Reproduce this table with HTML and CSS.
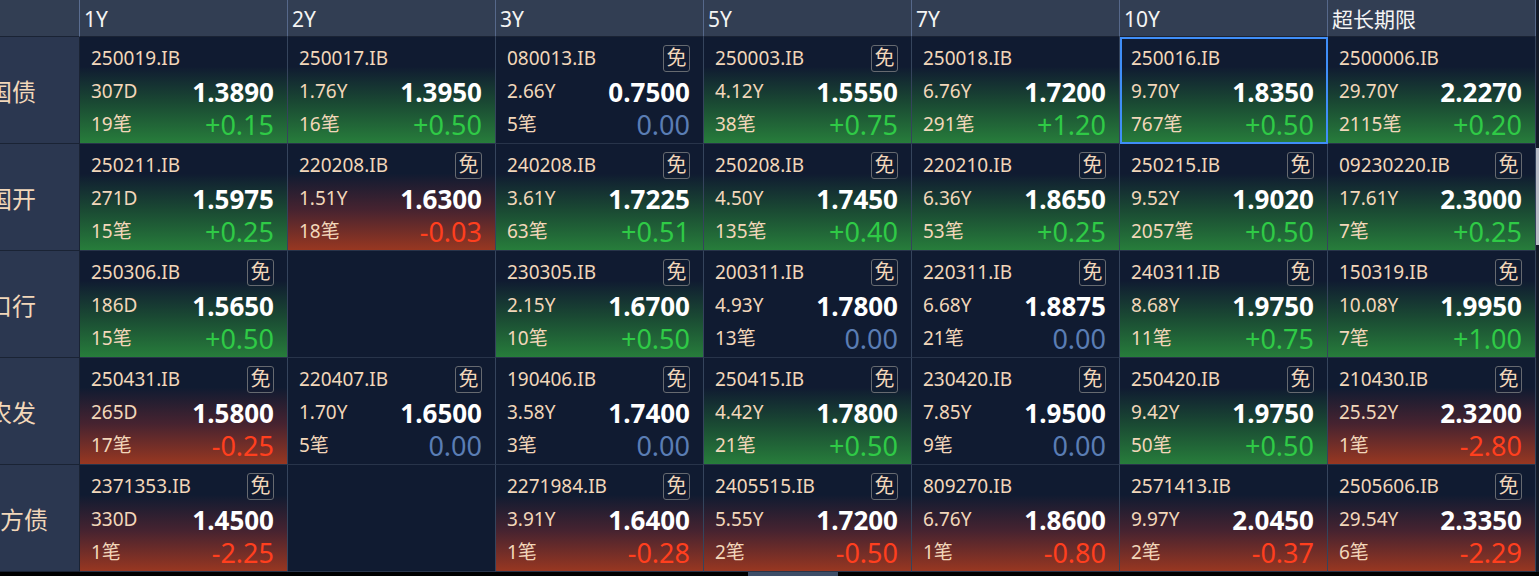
FILE: index.html
```html
<!DOCTYPE html>
<html lang="zh">
<head>
<meta charset="utf-8">
<title>收益率矩阵</title>
<link rel="stylesheet" href="styles.css">
</head>
<body>
<div class="frame">
  <div class="grid">
    <div class="hd hd-corner"></div>
    <div class="hd">1Y</div>
    <div class="hd">2Y</div>
    <div class="hd">3Y</div>
    <div class="hd">5Y</div>
    <div class="hd">7Y</div>
    <div class="hd">10Y</div>
    <div class="hd">超长期限</div>

    <!-- 国债 -->
    <div class="lbl"><span>国债</span></div>
    <div class="cell up"><div class="l1"><span class="code">250019.IB</span></div><div class="l2"><span class="term">307D</span><span class="yld">1.3890</span></div><div class="l3"><span class="cnt">19笔</span><span class="chg">+0.15</span></div></div>
    <div class="cell up"><div class="l1"><span class="code">250017.IB</span></div><div class="l2"><span class="term">1.76Y</span><span class="yld">1.3950</span></div><div class="l3"><span class="cnt">16笔</span><span class="chg">+0.50</span></div></div>
    <div class="cell flat"><div class="l1"><span class="code">080013.IB</span><span class="free">免</span></div><div class="l2"><span class="term">2.66Y</span><span class="yld">0.7500</span></div><div class="l3"><span class="cnt">5笔</span><span class="chg">0.00</span></div></div>
    <div class="cell up"><div class="l1"><span class="code">250003.IB</span><span class="free">免</span></div><div class="l2"><span class="term">4.12Y</span><span class="yld">1.5550</span></div><div class="l3"><span class="cnt">38笔</span><span class="chg">+0.75</span></div></div>
    <div class="cell up"><div class="l1"><span class="code">250018.IB</span></div><div class="l2"><span class="term">6.76Y</span><span class="yld">1.7200</span></div><div class="l3"><span class="cnt">291笔</span><span class="chg">+1.20</span></div></div>
    <div class="cell up selected"><div class="l1"><span class="code">250016.IB</span></div><div class="l2"><span class="term">9.70Y</span><span class="yld">1.8350</span></div><div class="l3"><span class="cnt">767笔</span><span class="chg">+0.50</span></div></div>
    <div class="cell up"><div class="l1"><span class="code">2500006.IB</span></div><div class="l2"><span class="term">29.70Y</span><span class="yld">2.2270</span></div><div class="l3"><span class="cnt">2115笔</span><span class="chg">+0.20</span></div></div>

    <!-- 国开 -->
    <div class="lbl"><span>国开</span></div>
    <div class="cell up"><div class="l1"><span class="code">250211.IB</span></div><div class="l2"><span class="term">271D</span><span class="yld">1.5975</span></div><div class="l3"><span class="cnt">15笔</span><span class="chg">+0.25</span></div></div>
    <div class="cell down"><div class="l1"><span class="code">220208.IB</span><span class="free">免</span></div><div class="l2"><span class="term">1.51Y</span><span class="yld">1.6300</span></div><div class="l3"><span class="cnt">18笔</span><span class="chg">-0.03</span></div></div>
    <div class="cell up"><div class="l1"><span class="code">240208.IB</span><span class="free">免</span></div><div class="l2"><span class="term">3.61Y</span><span class="yld">1.7225</span></div><div class="l3"><span class="cnt">63笔</span><span class="chg">+0.51</span></div></div>
    <div class="cell up"><div class="l1"><span class="code">250208.IB</span><span class="free">免</span></div><div class="l2"><span class="term">4.50Y</span><span class="yld">1.7450</span></div><div class="l3"><span class="cnt">135笔</span><span class="chg">+0.40</span></div></div>
    <div class="cell up"><div class="l1"><span class="code">220210.IB</span><span class="free">免</span></div><div class="l2"><span class="term">6.36Y</span><span class="yld">1.8650</span></div><div class="l3"><span class="cnt">53笔</span><span class="chg">+0.25</span></div></div>
    <div class="cell up"><div class="l1"><span class="code">250215.IB</span><span class="free">免</span></div><div class="l2"><span class="term">9.52Y</span><span class="yld">1.9020</span></div><div class="l3"><span class="cnt">2057笔</span><span class="chg">+0.50</span></div></div>
    <div class="cell up"><div class="l1"><span class="code">09230220.IB</span><span class="free">免</span></div><div class="l2"><span class="term">17.61Y</span><span class="yld">2.3000</span></div><div class="l3"><span class="cnt">7笔</span><span class="chg">+0.25</span></div></div>

    <!-- 口行 -->
    <div class="lbl"><span>口行</span></div>
    <div class="cell up"><div class="l1"><span class="code">250306.IB</span><span class="free">免</span></div><div class="l2"><span class="term">186D</span><span class="yld">1.5650</span></div><div class="l3"><span class="cnt">15笔</span><span class="chg">+0.50</span></div></div>
    <div class="cell empty"></div>
    <div class="cell up"><div class="l1"><span class="code">230305.IB</span><span class="free">免</span></div><div class="l2"><span class="term">2.15Y</span><span class="yld">1.6700</span></div><div class="l3"><span class="cnt">10笔</span><span class="chg">+0.50</span></div></div>
    <div class="cell flat"><div class="l1"><span class="code">200311.IB</span><span class="free">免</span></div><div class="l2"><span class="term">4.93Y</span><span class="yld">1.7800</span></div><div class="l3"><span class="cnt">13笔</span><span class="chg">0.00</span></div></div>
    <div class="cell flat"><div class="l1"><span class="code">220311.IB</span><span class="free">免</span></div><div class="l2"><span class="term">6.68Y</span><span class="yld">1.8875</span></div><div class="l3"><span class="cnt">21笔</span><span class="chg">0.00</span></div></div>
    <div class="cell up"><div class="l1"><span class="code">240311.IB</span><span class="free">免</span></div><div class="l2"><span class="term">8.68Y</span><span class="yld">1.9750</span></div><div class="l3"><span class="cnt">11笔</span><span class="chg">+0.75</span></div></div>
    <div class="cell up"><div class="l1"><span class="code">150319.IB</span><span class="free">免</span></div><div class="l2"><span class="term">10.08Y</span><span class="yld">1.9950</span></div><div class="l3"><span class="cnt">7笔</span><span class="chg">+1.00</span></div></div>

    <!-- 农发 -->
    <div class="lbl"><span>农发</span></div>
    <div class="cell down"><div class="l1"><span class="code">250431.IB</span><span class="free">免</span></div><div class="l2"><span class="term">265D</span><span class="yld">1.5800</span></div><div class="l3"><span class="cnt">17笔</span><span class="chg">-0.25</span></div></div>
    <div class="cell flat"><div class="l1"><span class="code">220407.IB</span><span class="free">免</span></div><div class="l2"><span class="term">1.70Y</span><span class="yld">1.6500</span></div><div class="l3"><span class="cnt">5笔</span><span class="chg">0.00</span></div></div>
    <div class="cell flat"><div class="l1"><span class="code">190406.IB</span><span class="free">免</span></div><div class="l2"><span class="term">3.58Y</span><span class="yld">1.7400</span></div><div class="l3"><span class="cnt">3笔</span><span class="chg">0.00</span></div></div>
    <div class="cell up"><div class="l1"><span class="code">250415.IB</span><span class="free">免</span></div><div class="l2"><span class="term">4.42Y</span><span class="yld">1.7800</span></div><div class="l3"><span class="cnt">21笔</span><span class="chg">+0.50</span></div></div>
    <div class="cell flat"><div class="l1"><span class="code">230420.IB</span><span class="free">免</span></div><div class="l2"><span class="term">7.85Y</span><span class="yld">1.9500</span></div><div class="l3"><span class="cnt">9笔</span><span class="chg">0.00</span></div></div>
    <div class="cell up"><div class="l1"><span class="code">250420.IB</span><span class="free">免</span></div><div class="l2"><span class="term">9.42Y</span><span class="yld">1.9750</span></div><div class="l3"><span class="cnt">50笔</span><span class="chg">+0.50</span></div></div>
    <div class="cell down"><div class="l1"><span class="code">210430.IB</span><span class="free">免</span></div><div class="l2"><span class="term">25.52Y</span><span class="yld">2.3200</span></div><div class="l3"><span class="cnt">1笔</span><span class="chg">-2.80</span></div></div>

    <!-- 地方债 -->
    <div class="lbl"><span>地方债</span></div>
    <div class="cell down"><div class="l1"><span class="code">2371353.IB</span><span class="free">免</span></div><div class="l2"><span class="term">330D</span><span class="yld">1.4500</span></div><div class="l3"><span class="cnt">1笔</span><span class="chg">-2.25</span></div></div>
    <div class="cell empty"></div>
    <div class="cell down"><div class="l1"><span class="code">2271984.IB</span><span class="free">免</span></div><div class="l2"><span class="term">3.91Y</span><span class="yld">1.6400</span></div><div class="l3"><span class="cnt">1笔</span><span class="chg">-0.28</span></div></div>
    <div class="cell down"><div class="l1"><span class="code">2405515.IB</span><span class="free">免</span></div><div class="l2"><span class="term">5.55Y</span><span class="yld">1.7200</span></div><div class="l3"><span class="cnt">2笔</span><span class="chg">-0.50</span></div></div>
    <div class="cell down"><div class="l1"><span class="code">809270.IB</span></div><div class="l2"><span class="term">6.76Y</span><span class="yld">1.8600</span></div><div class="l3"><span class="cnt">1笔</span><span class="chg">-0.80</span></div></div>
    <div class="cell down"><div class="l1"><span class="code">2571413.IB</span></div><div class="l2"><span class="term">9.97Y</span><span class="yld">2.0450</span></div><div class="l3"><span class="cnt">2笔</span><span class="chg">-0.37</span></div></div>
    <div class="cell down"><div class="l1"><span class="code">2505606.IB</span><span class="free">免</span></div><div class="l2"><span class="term">29.54Y</span><span class="yld">2.3350</span></div><div class="l3"><span class="cnt">6笔</span><span class="chg">-2.29</span></div></div>
  </div>
  <div class="vbar"><div class="vthumb"></div></div>
</div>
<div class="hbar"><div class="hthumb"></div></div>
</body>
</html>
```

FILE: styles.css
```css
* { box-sizing: border-box; }

html, body {
  margin: 0;
  padding: 0;
}

body {
  width: 1539px;
  height: 576px;
  overflow: hidden;
  background: #000;
  font-family: "Noto Sans", "Noto Sans CJK SC", sans-serif;
}

.frame {
  display: flex;
}

.grid {
  display: grid;
  grid-template-columns: 80px repeat(7, 208px);
  grid-template-rows: 37px repeat(5, 107px);
  width: 1536px;
}

.vbar {
  width: 3px;
  background: #131a27;
}

.vthumb {
  margin-top: 148px;
  height: 97px;
  background: #b7bcc5;
}

.hbar {
  height: 4px;
  background: #000;
  display: flex;
}

.hthumb {
  margin-left: 748px;
  width: 90px;
  background: #3d4d67;
}

.hd {
  background: #323e53;
  border-right: 1px solid #56688a;
  border-bottom: 1px solid #1a2334;
  color: #f4f4f4;
  font-size: 21px;
  line-height: 1;
  display: flex;
  align-items: center;
  padding: 3px 0 0 4px;
}

.hd-corner {
  border-right-color: #5a6d90;
}

.lbl {
  background: #2b3750;
  border-right: 1px solid #1a2334;
  border-bottom: 1px solid #1a2334;
  overflow: hidden;
  display: flex;
  align-items: center;
  color: #f2d7ba;
  font-size: 24px;
  line-height: 1;
}

.lbl span {
  display: block;
  flex: none;
  width: 130px;
  margin-left: -53px;
  text-align: center;
  white-space: nowrap;
  padding-top: 4px;
}

.cell {
  background: #101b31;
  border-right: 1px solid #35445c;
  border-bottom: 1px solid #28344a;
  padding: 7px 13px 0 11px;
  display: flex;
  flex-direction: column;
  color: #f2d7ba;
}

.cell.up {
  background: linear-gradient(180deg, #101b31 28%, #1a4933 62%, #277d3b 100%);
}

.cell.down {
  background: linear-gradient(180deg, #101b31 28%, #462330 62%, #983721 100%);
}

.cell.selected {
  outline: 2px solid #3f8ef8;
  outline-offset: -2px;
}

.l1, .l2, .l3 {
  display: flex;
  align-items: center;
  justify-content: space-between;
  white-space: nowrap;
  line-height: 1;
}

.l1 { height: 28px; }
.l2 { height: 34px; padding-top: 5px; }
.l3 { height: 33px; padding-top: 3px; }

.code, .term, .cnt {
  font-size: 19px;
  color: #f2d7ba;
}

.free {
  width: 27px;
  height: 27px;
  border: 1px solid #666a70;
  border-radius: 3px;
  display: flex;
  align-items: center;
  justify-content: center;
  font-size: 20px;
  color: #f2d7ba;
}

.yld {
  font-size: 26px;
  font-weight: 700;
  color: #ffffff;
}

.chg {
  font-size: 27px;
  color: #2fca46;
}

.down .chg {
  color: #ff3f1e;
}

.flat .chg {
  color: #5a7db4;
}
```
